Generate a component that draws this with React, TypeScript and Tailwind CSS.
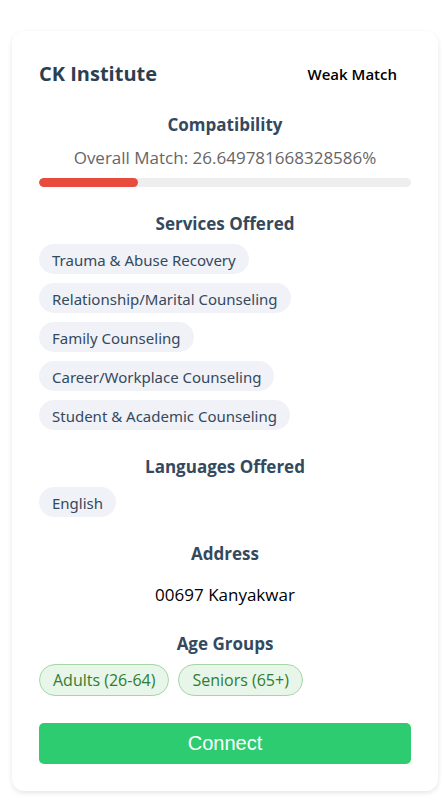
import type { ReactNode } from "react";

const services = [
  "Trauma & Abuse Recovery",
  "Relationship/Marital Counseling",
  "Family Counseling",
  "Career/Workplace Counseling",
  "Student & Academic Counseling",
];
const languages = ["English"];
const ageGroups = ["Adults (26-64)", "Seniors (65+)"];
const overallMatch = 26.649781668328586;
const overallMatchLabel = "26.649781668328586%";

function Section({ title, children }: { title: string; children: ReactNode }) {
  return (
    <section className="mb-[25px]">
      <h3 className="mb-2 text-center text-[17px] leading-6 font-bold text-[#34495e]">{title}</h3>
      {children}
    </section>
  );
}

function Tags({ items }: { items: string[] }) {
  return (
    <ul className="flex flex-col items-start gap-[9px]">
      {items.map((item) => (
        <li
          key={item}
          className="rounded-full bg-[#f0f2f7] px-[13px] pt-1 pb-[2px] font-['Noto_Sans','Open_Sans',sans-serif] text-[15px] leading-6 text-[#34495e]"
        >
          {item}
        </li>
      ))}
    </ul>
  );
}

export default function App() {
  return (
    <main className="bg-white pt-[31px] pr-[7px] pb-5 pl-3 font-['Open_Sans','Noto_Sans',sans-serif]">
      <article className="rounded-xl bg-white p-[27px] shadow-[0_2px_5px_rgba(0,0,0,0.1)]">
        <header className="mb-[23px] flex items-center justify-between">
          <h2 className="text-xl leading-8 font-bold text-[#2c3e50]">CK Institute</h2>
          <span className="px-[14px] text-[15px] leading-6 font-semibold text-black">Weak Match</span>
        </header>

        <Section title="Compatibility">
          <p id="overall-match" className="mb-2 text-center text-[17px] leading-[25px] text-[#666666]">
            Overall Match: {overallMatchLabel}
          </p>
          <div
            role="progressbar"
            aria-labelledby="overall-match"
            aria-valuenow={overallMatch}
            aria-valuemin={0}
            aria-valuemax={100}
            className="h-[9px] overflow-hidden rounded-full bg-[#eeeeee]"
          >
            <div className="h-full rounded-full bg-[#e74c3c]" style={{ width: `${overallMatch}%` }} />
          </div>
        </Section>

        <Section title="Services Offered">
          <Tags items={services} />
        </Section>

        <Section title="Languages Offered">
          <Tags items={languages} />
        </Section>

        <Section title="Address">
          <p className="pt-[9px] text-center text-[17px] leading-6 text-black">00697 Kanyakwar</p>
        </Section>

        <Section title="Age Groups">
          <ul className="flex flex-wrap gap-[9px]">
            {ageGroups.map((group) => (
              <li
                key={group}
                className="rounded-full border border-[#a5d6a7] bg-[#e8f5e9] px-[13px] py-[3px] text-base leading-6 text-[#2e7d32]"
              >
                {group}
              </li>
            ))}
          </ul>
        </Section>

        <button
          type="button"
          className="mt-[2px] w-full cursor-pointer rounded-[5px] bg-[#2ecc71] py-2 font-['Liberation_Sans',Arial,sans-serif] text-xl leading-[25px] text-white"
        >
          Connect
        </button>
      </article>
    </main>
  );
}
